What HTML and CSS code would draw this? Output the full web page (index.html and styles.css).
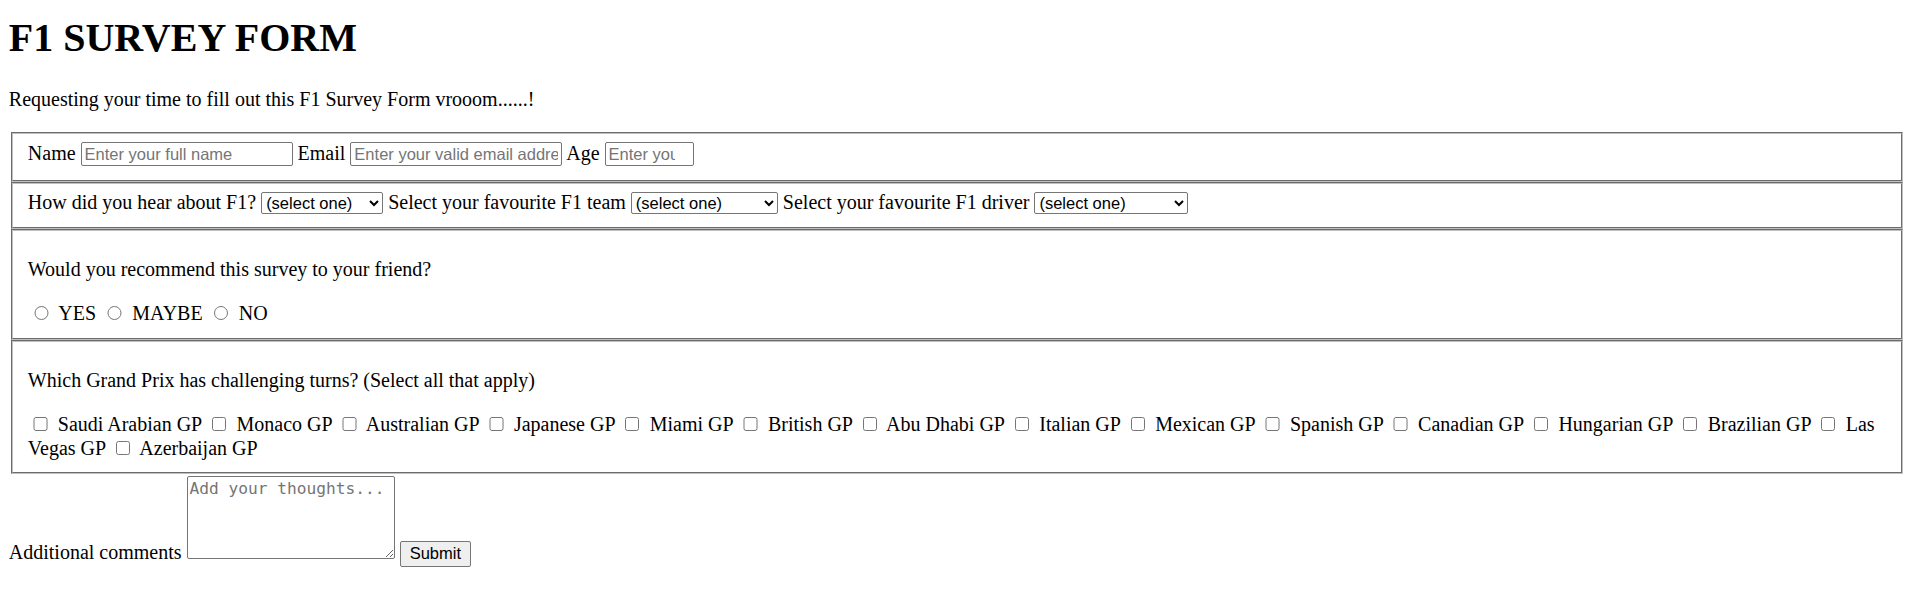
FILE: index.html
```html
<!DOCTYPE html>
<html lang="en">
<head>
<meta charset="utf-8">
<title>F1 Survey Form</title>
<link rel="stylesheet" href="styles.css">
</head>
<body class="page">
<h1 class="title" id="title">F1 SURVEY FORM</h1>
<p class="intro" id="description">Requesting your time to fill out this F1 Survey Form vrooom......!</p>
<form class="survey" id="survey-form">
<fieldset class="group group-text">
<label class="label" for="name">Name</label> <input class="field field-wide" id="name" type="text" placeholder="Enter your full name"> <label class="label" for="email">Email</label> <input class="field field-wide" id="email" type="email" placeholder="Enter your valid email address"> <label class="label" for="number">Age</label> <input class="field field-age" id="number" type="number" placeholder="Enter your age">
</fieldset>
<fieldset class="group group-select">
<label class="label" for="hear">How did you hear about F1?</label> <select class="choice choice-hear" id="hear"><option>(select one)</option></select> <label class="label" for="team">Select your favourite F1 team</label> <select class="choice choice-team" id="team"><option>(select one)</option></select> <label class="label" for="driver">Select your favourite F1 driver</label> <select class="choice choice-driver" id="driver"><option>(select one)</option></select>
</fieldset>
<fieldset class="group">
<p class="question">Would you recommend this survey to your friend?</p>
<input class="radio" type="radio" name="rec" id="yes"> <label for="yes">YES</label> <input class="radio" type="radio" name="rec" id="maybe"> <label for="maybe">MAYBE</label> <input class="radio" type="radio" name="rec" id="no"> <label for="no">NO</label>
</fieldset>
<fieldset class="group">
<p class="question">Which Grand Prix has challenging turns? (Select all that apply)</p>
<input class="check" type="checkbox" id="gp1"> <label for="gp1">Saudi Arabian GP</label> <input class="check" type="checkbox" id="gp2"> <label for="gp2">Monaco GP</label> <input class="check" type="checkbox" id="gp3"> <label for="gp3">Australian GP</label> <input class="check" type="checkbox" id="gp4"> <label for="gp4">Japanese GP</label> <input class="check" type="checkbox" id="gp5"> <label for="gp5">Miami GP</label> <input class="check" type="checkbox" id="gp6"> <label for="gp6">British GP</label> <input class="check" type="checkbox" id="gp7"> <label for="gp7">Abu Dhabi GP</label> <input class="check" type="checkbox" id="gp8"> <label for="gp8">Italian GP</label> <input class="check" type="checkbox" id="gp9"> <label for="gp9">Mexican GP</label> <input class="check" type="checkbox" id="gp10"> <label for="gp10">Spanish GP</label> <input class="check" type="checkbox" id="gp11"> <label for="gp11">Canadian GP</label> <input class="check" type="checkbox" id="gp12"> <label for="gp12">Hungarian GP</label> <input class="check" type="checkbox" id="gp13"> <label for="gp13">Brazilian GP</label> <input class="check" type="checkbox" id="gp14"> <label for="gp14">Las Vegas GP</label> <input class="check" type="checkbox" id="gp15"> <label for="gp15">Azerbaijan GP</label>
</fieldset>
<div class="comments">
<label class="label" for="thoughts">Additional comments</label> <textarea class="notes" id="thoughts" placeholder="Add your thoughts..."></textarea> <input class="submit" id="submit" type="submit" value="Submit">
</div>
</form>
</body>
</html>
```

FILE: styles.css
```css
.page {
  margin: 0 8.8px 8.8px;
  font-family: "Liberation Serif", "Times New Roman", serif;
  font-size: 20px;
  line-height: 22.75px;
  color: #000;
  background: #fff;
}

.title {
  font-size: 40px;
  line-height: 45.5px;
  font-weight: bold;
  margin: 15px 0 27px;
}

.intro {
  margin: 0 0 21.7px;
}

.survey {
  margin: 0;
}

.group {
  margin: 0 0 0 2.2px;
  padding: 7.65px 14.85px 12.6px;
  border: 2px groove #c0c0c0;
  min-width: min-content;
}

.group-text {
  padding-bottom: 14px;
}

.group-select {
  padding-top: 6.7px;
}

.question {
  margin: 19.8px 0;
}

.field,
.choice,
.submit {
  font-family: "Liberation Sans", Arial, sans-serif;
  font-size: 16.5px;
  line-height: normal;
}

.field {
  box-sizing: border-box;
  height: 24.6px;
  margin: 0;
  padding: 0 3px;
  border: 1px solid #767676;
  border-radius: 2px;
  color: #000;
  background: #fff;
}

.field::placeholder {
  color: #757575;
}

.field-wide {
  width: 212px;
}

.field-age {
  width: 89px;
}

.choice {
  box-sizing: border-box;
  height: 22.7px;
  margin: 0;
  border: 1px solid #767676;
  border-radius: 2px;
  background: #fff;
  color: #000;
}

.choice-hear {
  width: 122px;
}

.choice-team {
  width: 147px;
}

.choice-driver {
  width: 154px;
}

.radio {
  width: 14.3px;
  height: 14.3px;
  margin: 5.2px 5.5px 0.2px 6.4px;
}

.check {
  width: 14.3px;
  height: 14.3px;
  margin: 5px 5.3px 1.5px 5.4px;
}

.comments {
  margin: 2px 0 0;
}

.notes {
  box-sizing: border-box;
  width: 208.6px;
  height: 83px;
  margin: 0;
  padding: 2px 2px;
  border: 1px solid #767676;
  border-radius: 2px;
  font-family: "DejaVu Sans Mono", "Liberation Mono", monospace;
  font-size: 16.2px;
  line-height: normal;
  vertical-align: baseline;
}

.notes::placeholder {
  color: #757575;
}

.submit {
  box-sizing: border-box;
  width: 70.4px;
  height: 25.5px;
  margin: 0;
  padding: 1px 6px;
  border: 1px solid #767676;
  border-radius: 2px;
  background: #efefef;
  color: #000;
}
```
